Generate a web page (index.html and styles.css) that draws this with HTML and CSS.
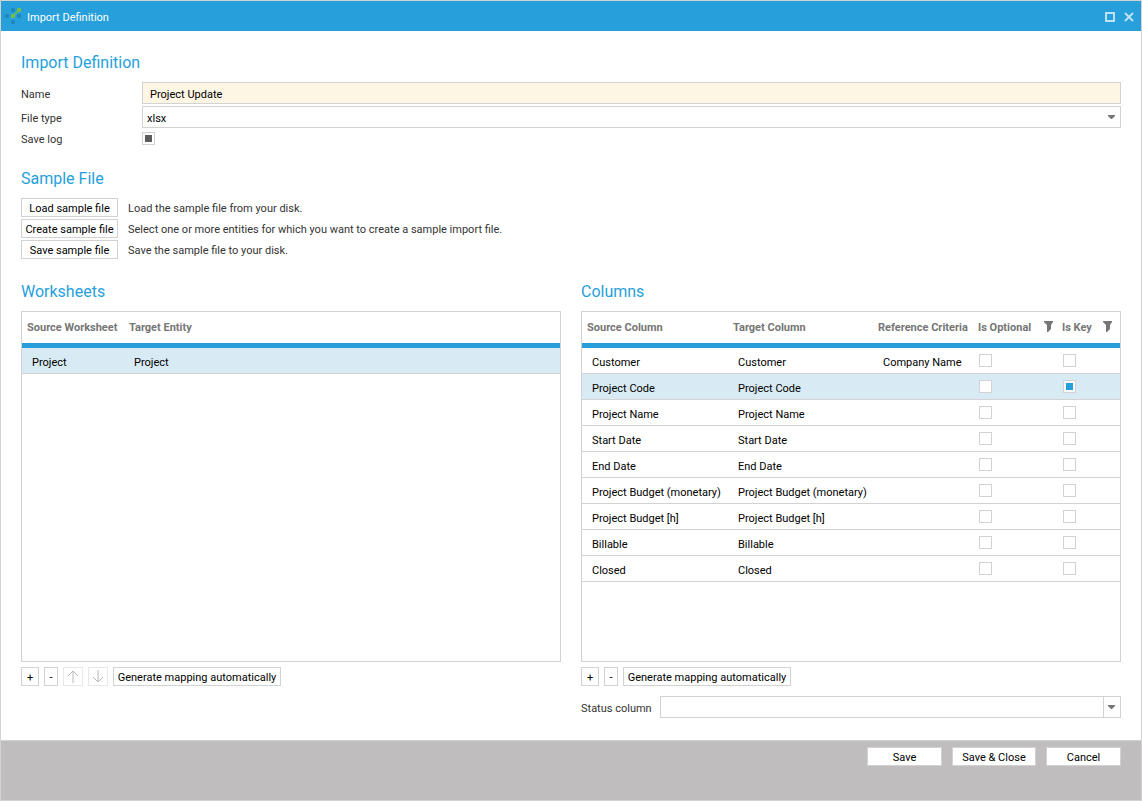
FILE: index.html
```html
<!DOCTYPE html>
<html lang="en">
<head>
<meta charset="utf-8">
<title>Import Definition</title>
<link rel="stylesheet" href="styles.css">
</head>
<body>
<svg class="sprite" aria-hidden="true">
  <symbol id="arrow" viewBox="0 0 7 4"><path d="M0 0h7v1L4 4H3L0 1z" fill="#767676"/></symbol>
  <symbol id="funnel" viewBox="0 0 9 11"><path d="M0 0h9v1L7 4v4L4 11H3V4L0 1z" fill="#767676"/></symbol>
</svg>
<div class="window">
  <header class="titlebar">
    <svg class="logo" width="16" height="16" viewBox="0 0 16 16" aria-hidden="true">
      <g fill="#1e88bd"><rect x="6" y="0" width="4" height="4" rx="1"/><rect x="0" y="6" width="4" height="4" rx="1"/><rect x="12" y="6" width="4" height="4" rx="1"/><rect x="6" y="12" width="4" height="4" rx="1"/></g>
      <g fill="#76bd43"><path d="M9 6l3-3 1 1-3 3z"/><rect x="6" y="6" width="4" height="4" rx="1"/><rect x="12" y="0" width="4" height="4" rx="1"/></g>
    </svg>
    <span class="title">Import Definition</span>
    <button class="winbtn" aria-label="Maximize"><svg width="10" height="10" viewBox="0 0 10 10"><path d="M1 1h8v8H1z" fill="none" stroke="#bfe1f4" stroke-width="2"/></svg></button>
    <button class="winbtn" aria-label="Close"><svg width="10" height="10" viewBox="0 0 10 10"><path d="M1 1l8 8M9 1L1 9" stroke="#bfe1f4" stroke-width="2"/></svg></button>
  </header>

  <main class="content">
    <section class="section">
      <h2>Import Definition</h2>
      <div class="form">
        <label for="name">Name</label>
        <input class="field name" id="name" type="text" value="Project Update">
        <label for="type">File type</label>
        <div class="combo">
          <select class="field" id="type"><option>xlsx</option></select>
          <span class="drop"><svg width="7" height="4"><use href="#arrow"/></svg></span>
        </div>
        <label for="log">Save log</label>
        <input class="check dark" id="log" type="checkbox" checked>
      </div>
    </section>

    <section class="section">
      <h2>Sample File</h2>
      <div class="samples">
        <button class="btn">Load sample file</button><span>Load the sample file from your disk.</span>
        <button class="btn">Create sample file</button><span>Select one or more entities for which you want to create a sample import file.</span>
        <button class="btn">Save sample file</button><span>Save the sample file to your disk.</span>
      </div>
    </section>

    <div class="panels">
      <section class="panel">
        <h2>Worksheets</h2>
        <div class="grid">
          <table>
            <colgroup><col class="c-sheet"><col></colgroup>
            <thead><tr><th>Source Worksheet</th><th>Target Entity</th></tr></thead>
            <tbody><tr class="selected"><td>Project</td><td>Project</td></tr></tbody>
          </table>
        </div>
        <div class="tools">
          <button class="btn plus">+</button>
          <button class="btn minus">-</button>
          <button class="btn move" disabled aria-label="Move up"><svg width="12" height="13" viewBox="0 0 12 13"><path d="M6 13V1M1 6l5-5 5 5" fill="none" stroke="#b8b8b8"/></svg></button>
          <button class="btn move" disabled aria-label="Move down"><svg width="12" height="13" viewBox="0 0 12 13"><path d="M6 0v12M1 7l5 5 5-5" fill="none" stroke="#b8b8b8"/></svg></button>
          <button class="btn generate">Generate mapping automatically</button>
        </div>
      </section>

      <section class="panel">
        <h2>Columns</h2>
        <div class="grid">
          <table>
            <colgroup><col class="c-source"><col class="c-target"><col class="c-ref"><col class="c-opt"><col></colgroup>
            <thead><tr>
              <th>Source Column</th><th>Target Column</th><th>Reference Criteria</th>
              <th><span class="filter">Is Optional<svg width="9" height="11"><use href="#funnel"/></svg></span></th>
              <th><span class="filter last">Is Key<svg width="9" height="11"><use href="#funnel"/></svg></span></th>
            </tr></thead>
            <tbody>
              <tr><td>Customer</td><td>Customer</td><td>Company Name</td><td class="tick"><input class="check" type="checkbox" aria-label="Customer is optional"></td><td class="tick"><input class="check" type="checkbox" aria-label="Customer is key"></td></tr>
              <tr class="selected"><td>Project Code</td><td>Project Code</td><td></td><td class="tick"><input class="check" type="checkbox" aria-label="Project Code is optional"></td><td class="tick"><input class="check" type="checkbox" checked aria-label="Project Code is key"></td></tr>
              <tr><td>Project Name</td><td>Project Name</td><td></td><td class="tick"><input class="check" type="checkbox" aria-label="Project Name is optional"></td><td class="tick"><input class="check" type="checkbox" aria-label="Project Name is key"></td></tr>
              <tr><td>Start Date</td><td>Start Date</td><td></td><td class="tick"><input class="check" type="checkbox" aria-label="Start Date is optional"></td><td class="tick"><input class="check" type="checkbox" aria-label="Start Date is key"></td></tr>
              <tr><td>End Date</td><td>End Date</td><td></td><td class="tick"><input class="check" type="checkbox" aria-label="End Date is optional"></td><td class="tick"><input class="check" type="checkbox" aria-label="End Date is key"></td></tr>
              <tr><td>Project Budget (monetary)</td><td>Project Budget (monetary)</td><td></td><td class="tick"><input class="check" type="checkbox" aria-label="Project Budget (monetary) is optional"></td><td class="tick"><input class="check" type="checkbox" aria-label="Project Budget (monetary) is key"></td></tr>
              <tr><td>Project Budget [h]</td><td>Project Budget [h]</td><td></td><td class="tick"><input class="check" type="checkbox" aria-label="Project Budget [h] is optional"></td><td class="tick"><input class="check" type="checkbox" aria-label="Project Budget [h] is key"></td></tr>
              <tr><td>Billable</td><td>Billable</td><td></td><td class="tick"><input class="check" type="checkbox" aria-label="Billable is optional"></td><td class="tick"><input class="check" type="checkbox" aria-label="Billable is key"></td></tr>
              <tr><td>Closed</td><td>Closed</td><td></td><td class="tick"><input class="check" type="checkbox" aria-label="Closed is optional"></td><td class="tick"><input class="check" type="checkbox" aria-label="Closed is key"></td></tr>
            </tbody>
          </table>
        </div>
        <div class="tools">
          <button class="btn plus">+</button>
          <button class="btn minus">-</button>
          <button class="btn generate">Generate mapping automatically</button>
        </div>
      </section>

      <div class="status">
        <label for="status">Status column</label>
        <div class="combo">
          <select class="field" id="status"><option></option></select>
          <span class="drop split"><svg width="7" height="4"><use href="#arrow"/></svg></span>
        </div>
      </div>
    </div>
  </main>

  <footer class="footer">
    <button class="btn">Save</button>
    <button class="btn wide">Save &amp; Close</button>
    <button class="btn">Cancel</button>
  </footer>
</div>
</body>
</html>
```
FILE: styles.css
```css
* { box-sizing: border-box; }

body {
  margin: 0;
  background: #fff;
  color: #333;
  font: 11px/14px Roboto, "Open Sans", sans-serif;
}

button, input, select { margin: 0; font: inherit; color: #000; }

.sprite { display: none; }
svg { display: block; flex: none; }

.window {
  display: flex;
  flex-direction: column;
  min-height: 100vh;
  border: 1px solid #d2d2d2;
}

.titlebar {
  display: flex;
  align-items: center;
  gap: 9px;
  height: 30px;
  padding: 0 7px 0 4px;
  background: #269fdb;
  color: #fff;
}
.title { flex: 1; padding-top: 4px; }
.logo { margin-right: -3px; }
.winbtn { padding: 2px 0 0; border: 0; background: none; }

.content {
  flex: 1;
  display: flex;
  flex-direction: column;
  padding: 21px 20px 22px;
}

h2 {
  margin: 0 0 8px;
  color: #269fdb;
  font-size: 16px;
  font-weight: 400;
  line-height: 22px;
}

.section { margin-bottom: 22px; }

.form {
  display: grid;
  grid-template-columns: 121px 1fr;
  align-items: center;
  row-gap: 2px;
}
.form label { padding-top: 3px; line-height: 13px; }

.field {
  display: block;
  width: 100%;
  height: 22px;
  padding: 2px 4px 0;
  border: 1px solid #d2d2d2;
  border-radius: 0;
  background: #fff;
  appearance: none;
}
select.field { padding-top: 3px; }
.field.name { padding-left: 7px; background: #fef6e4; }

.combo { position: relative; flex: 1; }
.drop {
  position: absolute;
  top: 0;
  right: 0;
  bottom: 0;
  display: flex;
  align-items: center;
  justify-content: center;
  width: 18px;
  padding-right: 2px;
  pointer-events: none;
}
.split { border-left: 1px solid #d2d2d2; }

.check {
  display: block;
  width: 13px;
  height: 13px;
  border: 1px solid #d2d2d2;
  background: #fff;
  appearance: none;
}
.check:checked { background: #269fdb; box-shadow: inset 0 0 0 2px #fff; }
.check.dark:checked { background-color: #5c5c5c; }

.btn {
  height: 19px;
  padding: 2px 0 0;
  border: 1px solid #d2d2d2;
  background: #fff;
  line-height: 15px;
  white-space: nowrap;
}

.samples {
  display: grid;
  grid-template-columns: 97px 1fr;
  align-items: center;
  gap: 2px 10px;
}
.samples span { padding-top: 2px; }

.panels {
  flex: 1;
  display: grid;
  grid-template-columns: 1fr 1fr;
  grid-template-rows: 1fr auto;
  gap: 10px 20px;
}
.panel { display: flex; flex-direction: column; min-width: 0; }
.grid { flex: 1; border: 1px solid #d2d2d2; }

table { width: 100%; table-layout: fixed; border-collapse: separate; border-spacing: 0; }
.c-sheet { width: 102px; }
.c-source { width: 146px; }
.c-target { width: 145px; }
.c-ref { width: 100px; }
.c-opt { width: 84px; }

th {
  height: 36px;
  padding: 1px 0 0 5px;
  border-bottom: 5px solid #269fdb;
  color: #767676;
  font-weight: 700;
  text-align: left;
  white-space: nowrap;
}
.filter { display: flex; justify-content: space-between; padding-right: 4px; }
.filter.last { padding-right: 8px; }

td {
  height: 26px;
  padding: 5px 0 0 10px;
  border-bottom: 1px solid #d2d2d2;
  color: #000;
  white-space: nowrap;
}
.tick { padding: 0 0 0 6px; }
.selected td { background: #d8eaf4; }

.tools { display: flex; gap: 5px; padding-top: 5px; }
.plus { width: 18px; }
.minus { width: 14px; }
.move { display: flex; align-items: center; justify-content: center; width: 20px; padding: 0; }
.move:disabled { border-color: #e8e8e8; }
.generate { width: 168px; }

.status { grid-column: 2; display: flex; align-items: center; }
.status label { width: 79px; padding-top: 3px; }

.footer {
  display: flex;
  justify-content: flex-end;
  gap: 10px;
  height: 60px;
  padding: 6px 20px;
  border-top: 1px solid #d2d2d2;
  background: #c0bdbe;
}
.footer .btn { width: 75px; }
.footer .wide { width: 84px; }
```
